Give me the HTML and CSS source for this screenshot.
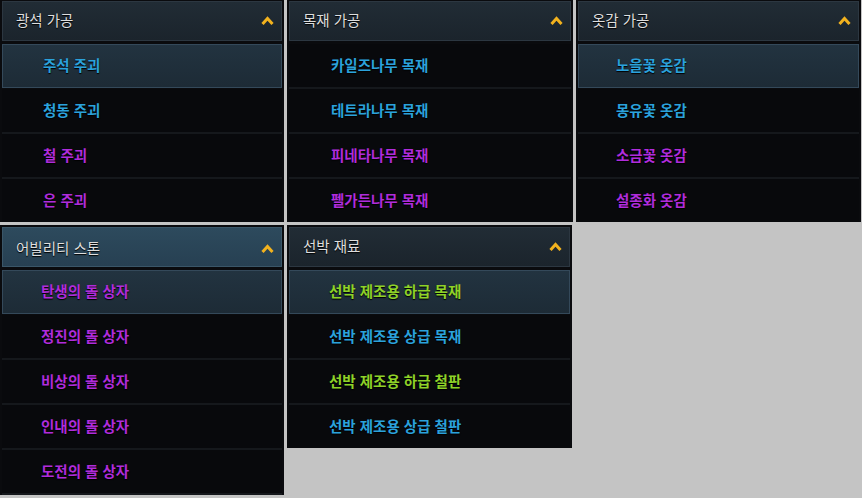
FILE: index.html
```html
<!DOCTYPE html>
<html lang="ko">
<head>
<meta charset="utf-8">
<title>가공 목록</title>
<link rel="stylesheet" href="styles.css">
</head>
<body>
<div class="board">
  <div class="row">
    <section class="panel w284 h222 in43">
      <div class="head"><span>광석 가공</span><svg class="chev" width="13" height="9" viewBox="0 0 13 9"><path d="M1.5 8 L6.5 2.5 L11.5 8"/></svg></div>
      <ul class="list">
        <li class="item sel blue">주석 주괴</li>
        <li class="item blue">청동 주괴</li>
        <li class="item purple">철 주괴</li>
        <li class="item purple">은 주괴</li>
      </ul>
    </section>
    <section class="panel w286 h222 in44">
      <div class="head"><span>목재 가공</span><svg class="chev" width="13" height="9" viewBox="0 0 13 9"><path d="M1.5 8 L6.5 2.5 L11.5 8"/></svg></div>
      <ul class="list">
        <li class="item blue">카일즈나무 목재</li>
        <li class="item blue">테트라나무 목재</li>
        <li class="item purple">피네타나무 목재</li>
        <li class="item purple">펠가든나무 목재</li>
      </ul>
    </section>
    <section class="panel w285 h222 in40">
      <div class="head"><span>옷감 가공</span><svg class="chev" width="13" height="9" viewBox="0 0 13 9"><path d="M1.5 8 L6.5 2.5 L11.5 8"/></svg></div>
      <ul class="list">
        <li class="item sel blue">노을꽃 옷감</li>
        <li class="item blue">몽유꽃 옷감</li>
        <li class="item purple">소금꽃 옷감</li>
        <li class="item purple">설종화 옷감</li>
      </ul>
    </section>
  </div>
  <div class="row">
    <section class="panel w284 h270 pad in41">
      <div class="head active"><span>어빌리티 스톤</span><svg class="chev" width="13" height="9" viewBox="0 0 13 9"><path d="M1.5 8 L6.5 2.5 L11.5 8"/></svg></div>
      <ul class="list">
        <li class="item sel purple">탄생의 돌 상자</li>
        <li class="item purple">정진의 돌 상자</li>
        <li class="item purple">비상의 돌 상자</li>
        <li class="item purple">인내의 돌 상자</li>
        <li class="item purple">도전의 돌 상자</li>
      </ul>
    </section>
    <section class="panel w285 h223 pad in42">
      <div class="head"><span>선박 재료</span><svg class="chev" width="13" height="9" viewBox="0 0 13 9"><path d="M1.5 8 L6.5 2.5 L11.5 8"/></svg></div>
      <ul class="list">
        <li class="item sel green">선박 제조용 하급 목재</li>
        <li class="item blue">선박 제조용 상급 목재</li>
        <li class="item green">선박 제조용 하급 철판</li>
        <li class="item blue">선박 제조용 상급 철판</li>
      </ul>
    </section>
  </div>
</div>
</body>
</html>
```

FILE: styles.css
```css
html, body {
  margin: 0;
  padding: 0;
}
body {
  background: #c4c4c4;
  font-family: "Noto Sans CJK KR", "Noto Sans", sans-serif;
  width: 862px;
  height: 498px;
  overflow: hidden;
}
.board {
  display: flex;
  flex-direction: column;
  gap: 3px;
}
.row {
  display: flex;
  gap: 3px;
  align-items: flex-start;
}
.panel {
  box-sizing: border-box;
  background: #0a0b0e;
  display: flex;
  flex-direction: column;
  overflow: hidden;
  padding: 1px 2px 0 2px;
  --inset: 41px;
}
.panel.pad { padding-top: 2px; }
.w284 { width: 284px; }
.w285 { width: 285px; }
.w286 { width: 286px; }
.h222 { height: 222px; }
.h223 { height: 223px; }
.h270 { height: 270px; }
.in40 { --inset: 38px; }
.in41 { --inset: 39px; }
.in42 { --inset: 40px; }
.in43 { --inset: 41px; }
.in44 { --inset: 42px; }

.head {
  flex: none;
  box-sizing: border-box;
  height: 40px;
  border: 1px solid #2c3741;
  background: linear-gradient(#212c35, #1b242c);
  display: flex;
  align-items: center;
  justify-content: space-between;
  padding: 0 7px 3px 13px;
  color: #dedede;
  font-size: 14.5px;
  text-shadow: 0 1px 1px #000;
}
.head.active {
  background: linear-gradient(#2d4a5d, #274052);
  border-color: #3a5668;
  padding-top: 3px;
}
.chev {
  margin-top: 2px;
}
.chev path {
  fill: none;
  stroke: #f2b21e;
  stroke-width: 3;
  stroke-linejoin: miter;
}
.list {
  list-style: none;
  margin: 3px 0 0 0;
  padding: 0;
  display: flex;
  flex-direction: column;
}
.item {
  flex: none;
  box-sizing: border-box;
  height: 45px;
  display: flex;
  align-items: center;
  padding-left: var(--inset);
  padding-bottom: 3px;
  font-size: 14.5px;
  font-weight: 700;
  border-bottom: 2px solid #15181c;
  background: #08090c;
  text-shadow: 0 1px 1px #000;
}
.item.sel {
  background: linear-gradient(#223340, #1d2b36);
  border: 1px solid #34495a;
  padding-left: calc(var(--inset) - 1px);
  height: 44px;
  margin-bottom: 1px;
}
.blue { color: #2ba2dc; }
.purple { color: #b02cdc; }
.green { color: #8fd228; }
```
